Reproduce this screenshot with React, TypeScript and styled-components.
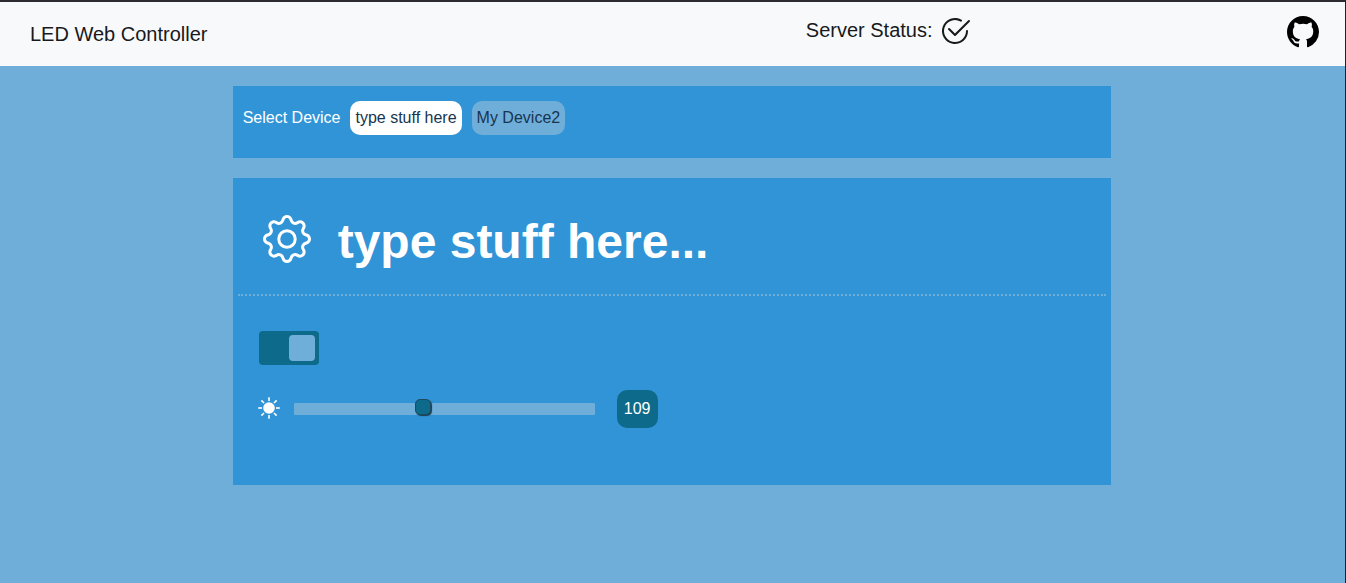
import React, { useState } from "react";
import styled, { createGlobalStyle } from "styled-components";
import { BsCheck2Circle, BsGear, BsGithub } from "react-icons/bs";

const GlobalStyle = createGlobalStyle`
  * { box-sizing: border-box; }
  body {
    margin: 0;
    min-height: 100vh;
    background: #70aeda;
    border-right: 1px solid #1a232c;
    font-family: "Liberation Sans", Arial, sans-serif;
    font-size: 16px;
    line-height: 24px;
    color: #fff;
  }
  svg { display: block; flex: none; }
`;

const Navbar = styled.header`
  display: grid;
  grid-template-columns: 3fr 2fr;
  column-gap: 6px;
  align-items: center;
  height: 66px;
  padding: 0 26px 0 30px;
  border-top: 2px solid #2d2b30;
  background: #f8f9fb;
  color: #17191c;
  font-size: 20px;
`;

const Brand = styled.a`
  color: inherit;
  text-decoration: none;
`;

const NavEnd = styled.div`
  display: flex;
  align-items: center;
  justify-content: space-between;
`;

const Status = styled.div`
  display: flex;
  gap: 6px;
  padding-bottom: 6px;
`;

const StatusLabel = styled.span`
  line-height: 30px;
`;

const GithubLink = styled.a`
  padding-bottom: 4px;
  color: #000;
`;

const Main = styled.main`
  display: grid;
  gap: 20px;
  width: 66%;
  min-width: 480px;
  margin: 20px auto;
  padding: 0 5px 0 4px;
`;

const DeviceBar = styled.section`
  display: flex;
  align-items: center;
  gap: 10px;
  padding: 15px 10px 23px;
  background: #3194d7;
`;

const DeviceButton = styled.button<{ $active?: boolean }>`
  height: 34px;
  padding: 0 5px;
  border: 0;
  border-radius: 10px;
  background: ${(p) => (p.$active ? "#fff" : "#70aeda")};
  color: #17354f;
  font: inherit;
`;

const Panel = styled.section`
  padding: 0 5px 57px;
  background: #3194d7;
`;

const PanelHeader = styled.div`
  display: flex;
  align-items: center;
  gap: 27px;
  height: 118px;
  padding: 12px 25px 0;
  border-bottom: 2px dotted #70aeda;
`;

const IconButton = styled.button`
  padding: 0 0 6px;
  border: 0;
  background: none;
  color: inherit;
`;

const Title = styled.h1`
  margin: 0;
  font-size: 48px;
  line-height: 58px;
`;

const Controls = styled.div`
  display: grid;
  justify-items: start;
  gap: 25px;
  padding: 35px 20px 0;
`;

const Toggle = styled.input`
  appearance: none;
  display: flex;
  align-items: center;
  width: 60px;
  height: 34px;
  margin: 0 1px;
  padding: 4px;
  border-radius: 4px;
  background: #0d6a8a;

  &::before {
    content: "";
    width: 26px;
    height: 26px;
    border-radius: 4px;
    background: #70aeda;
  }
  &:checked { justify-content: flex-end; }
`;

const Brightness = styled.label`
  display: flex;
  align-items: center;
`;

const Sun = styled.svg`
  width: 22px;
  height: 22px;
  margin-bottom: 3px;
  fill: currentColor;
  stroke: currentColor;
`;

const Slider = styled.input`
  appearance: none;
  width: 301px;
  height: 12px;
  margin: 0 22px 0 14px;
  border-radius: 1px;
  background: #70aeda;

  &::-webkit-slider-runnable-track {
    height: 12px;
  }
  &::-webkit-slider-thumb {
    appearance: none;
    width: 16px;
    height: 16px;
    margin-top: -4px;
    border: 1px solid #1d4a5e;
    border-radius: 5px;
    background: #0d6a8a;
    box-shadow: 1px 1px 1px #1d3a4e;
  }
`;

const Value = styled.output`
  min-width: 41px;
  padding: 7px;
  border-radius: 10px;
  background: #0d6a8a;
  text-align: center;
`;

const rays = [0, 45, 90, 135, 180, 225, 270, 315];

const SunIcon = () => (
  <Sun viewBox="0 0 22 22" aria-hidden="true">
    <circle cx="11" cy="11" r="5.8" stroke="none" />
    {rays.map((angle) => (
      <path key={angle} d="M11 .2v3.8" strokeWidth="1.6" transform={`rotate(${angle} 11 11)`} />
    ))}
  </Sun>
);

const devices = [
  { name: "type stuff here", title: "type stuff here..." },
  { name: "My Device2", title: "My Device2" },
];

export default function App() {
  const [selected, setSelected] = useState(0);
  const [on, setOn] = useState(true);
  const [level, setLevel] = useState(109);

  return (
    <>
      <GlobalStyle />
      <Navbar>
        <Brand href="#">LED Web Controller</Brand>
        <NavEnd>
          <Status>
            <StatusLabel>Server Status:</StatusLabel>
            <BsCheck2Circle size={32} />
          </Status>
          <GithubLink href="#" aria-label="GitHub">
            <BsGithub size={32} />
          </GithubLink>
        </NavEnd>
      </Navbar>
      <Main>
        <DeviceBar>
          <span>Select Device</span>
          {devices.map((device, i) => (
            <DeviceButton key={device.name} $active={i === selected} onClick={() => setSelected(i)}>
              {device.name}
            </DeviceButton>
          ))}
        </DeviceBar>
        <Panel>
          <PanelHeader>
            <IconButton aria-label="Settings">
              <BsGear size={48} />
            </IconButton>
            <Title>{devices[selected].title}</Title>
          </PanelHeader>
          <Controls>
            <Toggle type="checkbox" aria-label="Power" checked={on} onChange={(e) => setOn(e.target.checked)} />
            <Brightness>
              <SunIcon />
              <Slider
                type="range"
                aria-label="Brightness"
                min={0}
                max={255}
                value={level}
                onChange={(e) => setLevel(Number(e.target.value))}
              />
              <Value>{level}</Value>
            </Brightness>
          </Controls>
        </Panel>
      </Main>
    </>
  );
}
